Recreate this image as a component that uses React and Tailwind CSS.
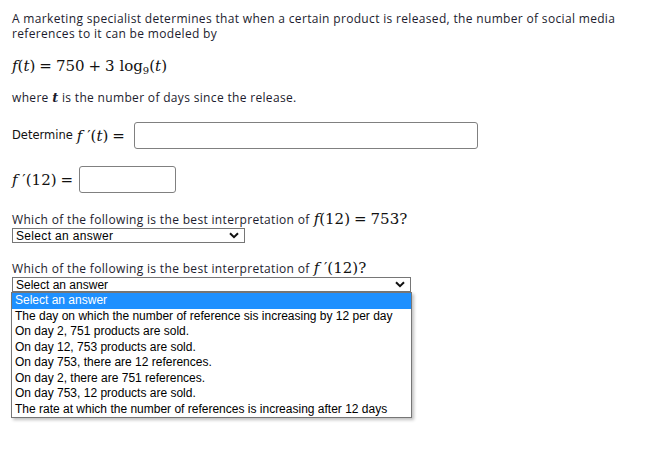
const body = { fontFamily: '"Open Sans", "DejaVu Sans", sans-serif' }

function Chevron() {
  return (
    <svg width="10" height="7" viewBox="0 0 10 7" className="shrink-0">
      <path d="M1 1.2 L5 5.2 L9 1.2" fill="none" stroke="#111" strokeWidth="2" />
    </svg>
  )
}

function M({ children }) {
  return <span className="font-['DejaVu_Serif',serif] text-[15px] leading-[18px] text-[#111]">{children}</span>
}

function I({ children }) {
  return <i className="font-['DejaVu_Serif',serif]">{children}</i>
}

function Op({ children }) {
  return <span className="mx-[4px]">{children}</span>
}

function SelectBox({ width }) {
  return (
    <div
      className={`flex h-[15px] items-center justify-between border border-[#767676] bg-white pl-[3px] pr-[5px] font-['Liberation_Sans',Arial,sans-serif] text-[12px] leading-none text-black ${width}`}
    >
      <span>Select an answer</span>
      <Chevron />
    </div>
  )
}

const OPTIONS = [
  'Select an answer',
  'The day on which the number of reference sis increasing by 12 per day',
  'On day 2, 751 products are sold.',
  'On day 12, 753 products are sold.',
  'On day 753, there are 12 references.',
  'On day 2, there are 751 references.',
  'On day 753, 12 products are sold.',
  'The rate at which the number of references is increasing after 12 days',
]

export default function App() {
  return (
    <div className="h-[456px] w-[649px] bg-white px-[12px] pt-[11px] text-[12px] leading-[15px] tracking-[0.33px] text-[#1c1c2e]" style={body}>
      <p>
        A marketing specialist determines that when a certain product is released, the number of social media references to it can be modeled by
      </p>

      <div className="mt-[15px] flex h-[20px] items-center tracking-normal">
        <M>
          <I>f</I>(<I>t</I>)<Op>=</Op>750<Op>+</Op>3 log<sub className="text-[10px]">9</sub>(<I>t</I>)
        </M>
      </div>

      <p className="mt-[14px]">
        where <I><span className="text-[13px] font-bold">t</span></I> is the number of days since the release.
      </p>

      <div className="mt-[16px] flex items-center tracking-normal">
        <span className="font-['DejaVu_Sans',sans-serif] text-[11.5px] text-[#111]">Determine</span>
        <span className="ml-[4px]">
          <M>
            <I>f</I> ′(<I>t</I>)<Op>=</Op>
          </M>
        </span>
        <div className="ml-[5px] h-[27px] w-[344px] rounded-[3px] border border-[#808080] bg-white" />
      </div>

      <div className="mt-[17px] flex items-center tracking-normal">
        <M>
          <I>f</I> ′(12)<Op>=</Op>
        </M>
        <div className="ml-[2px] h-[27px] w-[97px] rounded-[3px] border border-[#808080] bg-white" />
      </div>

      <p className="mt-[17px] flex items-center gap-[4px]">
        Which of the following is the best interpretation of{' '}
        <span className="tracking-normal">
          <M>
            <I>f</I>(12)<Op>=</Op>753?
          </M>
        </span>
      </p>
      <div>
        <SelectBox width="w-[233px]" />
      </div>

      <p className="mt-[16px] flex items-center gap-[4px]">
        Which of the following is the best interpretation of{' '}
        <span className="tracking-normal">
          <M>
            <I>f</I> ′(12)?
          </M>
        </span>
      </p>
      <div className="relative tracking-normal">
        <SelectBox width="w-[399px]" />
        <ul className="absolute left-[-1px] top-[15px] w-[401px] border border-[#767676] bg-white font-['Liberation_Sans',Arial,sans-serif] text-[12px] text-black shadow-[2px_2px_3px_rgba(0,0,0,0.25)]">
          {OPTIONS.map((o, i) => (
            <li
              key={o}
              className={`h-[15.5px] pl-[3px] leading-[15.5px] ${i === 0 ? 'bg-[#1e90ff] text-white' : ''}`}
            >
              {o}
            </li>
          ))}
        </ul>
      </div>
    </div>
  )
}
